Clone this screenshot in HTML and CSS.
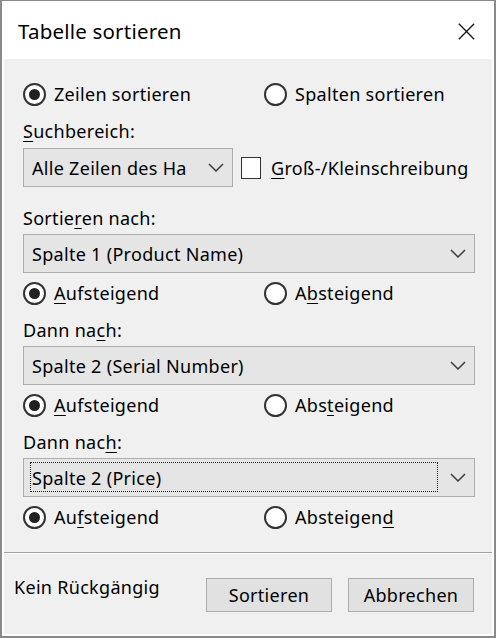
FILE: index.html
```html
<!DOCTYPE html>
<html lang="de">
<head>
<meta charset="utf-8">
<title>Tabelle sortieren</title>
<link rel="stylesheet" href="styles.css">
</head>
<body>
<div class="window">
  <div class="titlebar">
    <span class="title">Tabelle sortieren</span>
    <svg class="close" width="20" height="20" viewBox="0 0 20 20" aria-hidden="true">
      <path d="M1 1 L19 19 M19 1 L1 19" stroke="#1a1a1a" stroke-width="1.6" fill="none"/>
    </svg>
  </div>
  <div class="client">
    <div class="content">
      <div class="radio-row first-row">
        <label class="radio checked"><span class="dot"></span><span class="txt">Zeilen sortieren</span></label>
        <label class="radio"><span class="dot"></span><span class="txt">Spalten sortieren</span></label>
      </div>
      <div class="label label-range"><u>S</u>uchbereich:</div>
      <div class="range-row">
        <div class="combo combo-small">
          <span class="combo-text">Alle Zeilen des Ha</span>
          <svg class="chev" width="16" height="9" viewBox="0 0 16 9" aria-hidden="true"><polyline points="1,1 8,8 15,1" fill="none" stroke="#3c3c3c" stroke-width="1.5"/></svg>
        </div>
        <label class="check"><span class="box"></span><span class="txt"><u>G</u>roß-/Kleinschreibung</span></label>
      </div>

      <div class="label label-group label-first">Sortie<u>r</u>en nach:</div>
      <div class="combo">
        <span class="combo-text">Spalte 1 (Product Name)</span>
        <svg class="chev" width="16" height="9" viewBox="0 0 16 9" aria-hidden="true"><polyline points="1,1 8,8 15,1" fill="none" stroke="#3c3c3c" stroke-width="1.5"/></svg>
      </div>
      <div class="radio-row order-row">
        <label class="radio checked"><span class="dot"></span><span class="txt"><u>A</u>ufsteigend</span></label>
        <label class="radio"><span class="dot"></span><span class="txt">A<u>b</u>steigend</span></label>
      </div>

      <div class="label label-group">Dann na<u>c</u>h:</div>
      <div class="combo">
        <span class="combo-text">Spalte 2 (Serial Number)</span>
        <svg class="chev" width="16" height="9" viewBox="0 0 16 9" aria-hidden="true"><polyline points="1,1 8,8 15,1" fill="none" stroke="#3c3c3c" stroke-width="1.5"/></svg>
      </div>
      <div class="radio-row order-row">
        <label class="radio checked"><span class="dot"></span><span class="txt"><u>A</u>ufsteigend</span></label>
        <label class="radio"><span class="dot"></span><span class="txt">Abs<u>t</u>eigend</span></label>
      </div>

      <div class="label label-group">Dann nac<u>h</u>:</div>
      <div class="combo combo-focus">
        <span class="combo-text">Spalte 2 (Price)</span>
        <svg class="chev" width="16" height="9" viewBox="0 0 16 9" aria-hidden="true"><polyline points="1,1 8,8 15,1" fill="none" stroke="#3c3c3c" stroke-width="1.5"/></svg>
      </div>
      <div class="radio-row order-row">
        <label class="radio checked"><span class="dot"></span><span class="txt">Au<u>f</u>steigend</span></label>
        <label class="radio"><span class="dot"></span><span class="txt">Absteigen<u>d</u></span></label>
      </div>
    </div>
    <div class="separator"></div>
    <div class="footer">
      <span class="note">Kein Rückgängig</span>
      <button class="btn btn-first" type="button">Sortieren</button>
      <button class="btn" type="button">Abbrechen</button>
    </div>
  </div>
</div>
</body>
</html>
```

FILE: styles.css
```css
* { box-sizing: border-box; }

html, body {
  margin: 0;
  padding: 0;
  background: #ffffff;
}

body {
  font-family: "Noto Sans", "Open Sans", sans-serif;
  font-size: 18px;
  letter-spacing: 0.3px;
  color: #000;
}

.window {
  width: 496px;
  height: 638px;
  border: 2px solid #8a8a8a;
  border-top-width: 1px;
  background: #ffffff;
  display: flex;
  flex-direction: column;
}

.titlebar {
  height: 58px;
  flex: none;
  display: flex;
  align-items: center;
  padding: 0 18px 0 16px;
}

.title {
  font-size: 20.5px;
  letter-spacing: 0.2px;
  flex: 1;
  margin-top: 2px;
}

.close {
  width: 19px;
  height: 17px;
  margin-top: 3px;
}

.client {
  flex: 1;
  margin: 0 2px 2px 2px;
  background: #f0f0f0;
  display: flex;
  flex-direction: column;
}

.content {
  padding: 0 17px 0 19px;
  display: flex;
  flex-direction: column;
}

u {
  text-decoration-thickness: 1px;
  text-underline-offset: 3px;
}

.radio-row {
  display: grid;
  grid-template-columns: 241px 1fr;
  height: 24px;
  align-items: center;
}

.first-row { margin-top: 23px; }
.order-row { margin-top: 8px; }

.radio {
  display: flex;
  align-items: center;
  gap: 8px;
  line-height: 22px;
  white-space: nowrap;
}

.dot {
  width: 23px;
  height: 23px;
  border: 2px solid #333;
  border-radius: 50%;
  background: #fff;
  display: flex;
  align-items: center;
  justify-content: center;
  flex: none;
}

.checked .dot::after {
  content: "";
  width: 11px;
  height: 11px;
  border-radius: 50%;
  background: #222;
}

.label {
  height: 22px;
  line-height: 22px;
  white-space: nowrap;
}

.label-range { margin-top: 14px; margin-bottom: 6px; }
.label-group { margin-top: 14px; margin-bottom: 5px; }
.label-first { margin-top: 20px; }

.range-row {
  display: flex;
  align-items: center;
  gap: 8px;
}

.combo {
  height: 39px;
  border: 1px solid #adadad;
  background: #e5e5e5;
  display: flex;
  align-items: center;
  padding: 0 8px 0 8px;
  white-space: nowrap;
}

.combo-small {
  width: 210px;
  flex: none;
}

.combo-text {
  flex: 1;
  overflow: hidden;
}

.chev { flex: none; margin-left: 6px; }

.combo-focus { position: relative; }
.combo-focus::before {
  content: "";
  position: absolute;
  left: 6px;
  top: 3px;
  bottom: 4px;
  right: 36px;
  border: 1px dotted #222;
}

.check {
  display: flex;
  align-items: center;
  gap: 10px;
  white-space: nowrap;
}

.box {
  width: 20px;
  height: 22px;
  border: 1px solid #333;
  background: #fff;
  flex: none;
}

.separator {
  margin-top: 23px;
  height: 2px;
  border-top: 1px solid #a0a0a0;
  border-bottom: 1px solid #ffffff;
}

.footer {
  display: flex;
  align-items: flex-start;
  padding: 24px 18px 0 10px;
  gap: 16px;
}

.note {
  line-height: 18px;
  white-space: nowrap;
}

.btn {
  font: inherit;
  letter-spacing: inherit;
  color: #000;
  width: 126px;
  height: 34px;
  border: 1px solid #adadad;
  background: #e1e1e1;
  padding: 0;
  margin: 0;
}

.btn-first { margin-left: auto; }
```
